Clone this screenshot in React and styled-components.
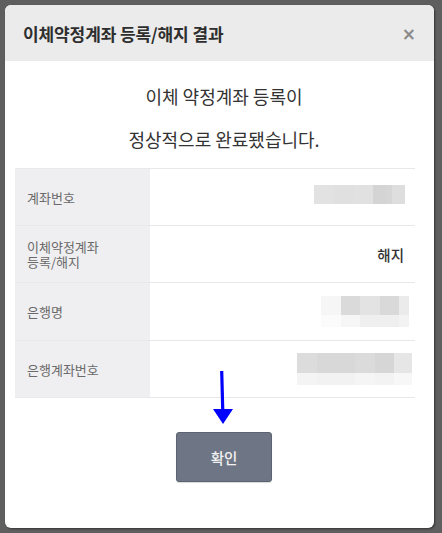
import React from "react";
import styled, { createGlobalStyle } from "styled-components";

const Global = createGlobalStyle`
  html, body { margin: 0; padding: 0; }
  body {
    background: #5f5f5f;
    font-family: "Noto Sans CJK KR", "Noto Sans", sans-serif;
    width: 442px;
    height: 533px;
    overflow: hidden;
  }
`;

const Frame = styled.div`
  position: relative;
  width: 442px;
  height: 533px;
  box-sizing: border-box;
  padding: 5px 8px 5px 5px;
`;

const Modal = styled.div`
  width: 429px;
  height: 523px;
  background: #fff;
  border-radius: 6px;
  overflow: hidden;
  box-shadow: 1px 1px 2px rgba(0, 0, 0, 0.45);
  display: flex;
  flex-direction: column;
`;

const Header = styled.div`
  height: 56px;
  flex: none;
  background: #ebebeb;
  display: flex;
  align-items: center;
  justify-content: space-between;
  padding: 0 18px 0 18px;
`;

const Title = styled.h1`
  margin: 0;
  font-size: 17px;
  font-weight: 700;
  color: #2e2e2e;
  letter-spacing: -0.1px;
`;

const Close = styled.span`
  font-family: "DejaVu Sans", sans-serif;
  font-size: 17px;
  font-weight: 700;
  color: #8a8a8a;
  line-height: 1;
  margin-top: 2px;
`;

const Message = styled.div`
  padding-top: 14px;
  padding-left: 9px;
  margin-bottom: 7px;
  text-align: center;
  font-size: 18px;
  line-height: 43px;
  color: #333;
`;

const Table = styled.div`
  margin: 0 19px 0 10px;
  border-top: 1px solid #e8e8ea;
`;

const Row = styled.div`
  display: grid;
  grid-template-columns: 135px 1fr;
  height: ${(p) => p.$h || 57}px;
  border-bottom: 1px solid #e8e8ea;
  box-sizing: border-box;
`;

const Label = styled.div`
  background: #efeff1;
  display: flex;
  align-items: center;
  padding-left: 12px;
  font-size: 13px;
  line-height: 15px;
  color: #6a6a6a;
`;

const Value = styled.div`
  display: flex;
  align-items: center;
  justify-content: flex-end;
  padding-right: ${(p) => p.$pr || 10}px;
  font-size: 14.5px;
  font-weight: 500;
  color: #333;
  padding-bottom: ${(p) => p.$pb || 0}px;
`;

const Blur = styled.div`
  display: flex;
  flex-direction: column;
`;

const BlurLine = styled.div`
  display: flex;
  height: ${(p) => p.$h}px;
`;

const Cell = styled.div`
  flex: none;
`;

const Footer = styled.div`
  display: flex;
  justify-content: center;
  padding-top: 34px;
  padding-left: 9px;
`;

const Button = styled.button`
  width: 96px;
  height: 50px;
  background: #6e7585;
  border: 1px solid #5d6372;
  border-radius: 3px;
  color: #f2f2f2;
  font-family: "Noto Sans CJK KR", "Noto Sans", sans-serif;
  font-size: 14.5px;
  font-weight: 500;
  box-shadow: 0 1px 1px rgba(0, 0, 0, 0.15);
  cursor: pointer;
`;

const Arrow = styled.svg`
  position: absolute;
  left: 210px;
  top: 368px;
`;

function Pixels({ lines }) {
  return (
    <Blur>
      {lines.map((line, i) => (
        <BlurLine key={i} $h={line.h}>
          {line.cells.map(([w, c], j) => (
            <Cell key={j} style={{ width: w, background: c }} />
          ))}
        </BlurLine>
      ))}
    </Blur>
  );
}

const blur1 = [
  {
    h: 19,
    cells: [
      [20, "#e2e2e2"],
      [20, "#e0e0e0"],
      [19, "#e1e1e1"],
      [13, "#d4d4d4"],
      [6, "#d6d6d6"],
      [13, "#dedede"],
    ],
  },
];

const blur3 = [
  {
    h: 19,
    cells: [
      [20, "#f6f6f6"],
      [19, "#dadada"],
      [20, "#e3e3e3"],
      [19, "#d9d9d9"],
      [10, "#ebebeb"],
    ],
  },
  {
    h: 12,
    cells: [
      [20, "#fbfbfb"],
      [19, "#f6f6f6"],
      [39, "#efefef"],
      [10, "#f3f3f3"],
    ],
  },
];

const blur4 = [
  {
    h: 20,
    cells: [
      [20, "#dcdcdc"],
      [38, "#d8d8d8"],
      [20, "#dbdbdb"],
      [19, "#d6d6d6"],
      [18, "#e6e6e6"],
    ],
  },
  {
    h: 12,
    cells: [
      [20, "#f4f4f4"],
      [38, "#f2f2f2"],
      [20, "#f5f5f5"],
      [19, "#f3f3f3"],
      [18, "#f7f7f7"],
    ],
  },
];

export default function App() {
  return (
    <>
      <Global />
      <Frame>
        <Modal>
          <Header>
            <Title>이체약정계좌 등록/해지 결과</Title>
            <Close>×</Close>
          </Header>
          <Message>
            이체 약정계좌 등록이
            <br />
            정상적으로 완료됐습니다.
          </Message>
          <Table>
            <Row>
              <Label>계좌번호</Label>
              <Value $pr={10} $pb={6}>
                <Pixels lines={blur1} />
              </Value>
            </Row>
            <Row>
              <Label>
                이체약정계좌
                <br />
                등록/해지
              </Label>
              <Value $pr={11}>해지</Value>
            </Row>
            <Row $h={58}>
              <Label>은행명</Label>
              <Value $pr={6}>
                <Pixels lines={blur3} />
              </Value>
            </Row>
            <Row>
              <Label>은행계좌번호</Label>
              <Value $pr={3}>
                <Pixels lines={blur4} />
              </Value>
            </Row>
          </Table>
          <Footer>
            <Button>확인</Button>
          </Footer>
        </Modal>
        <Arrow width="26" height="60" viewBox="0 0 26 60">
          <line x1="11.7" y1="3" x2="12.8" y2="44" stroke="#0000ff" strokeWidth="3.2" />
          <polygon points="3,41 23,41 13,56" fill="#0000ff" />
        </Arrow>
      </Frame>
    </>
  );
}
